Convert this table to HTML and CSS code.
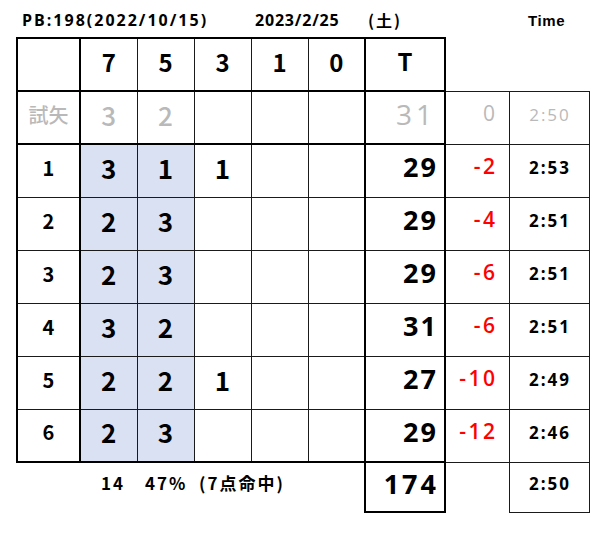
FILE: index.html
```html
<!DOCTYPE html>
<html lang="ja">
<head>
<meta charset="utf-8">
<link rel="stylesheet" href="styles.css">
</head>
<body>
<div class="title">
  <span class="pb">PB:198(2022/10/15)</span>
  <span class="date">2023/2/25</span>
  <span class="dow">(土)</span>
  <span class="time-label">Time</span>
</div>
<table class="sheet">
  <colgroup>
    <col class="c-label"><col class="c-num"><col class="c-num"><col class="c-num"><col class="c-num"><col class="c-num"><col class="c-total"><col class="c-diff"><col class="c-time">
  </colgroup>
  <tr class="head">
    <td class="label"></td><td class="num">7</td><td class="num">5</td><td class="num">3</td><td class="num">1</td><td class="num">0</td><td class="total">T</td><td class="blank"></td><td class="blank"></td>
  </tr>
  <tr class="trial">
    <td class="label">試矢</td><td class="num">3</td><td class="num">2</td><td class="num"></td><td class="num"></td><td class="num"></td><td class="total">31</td><td class="diff">0</td><td class="time">2:50</td>
  </tr>
  <tr class="end">
    <td class="label">1</td><td class="num hit">3</td><td class="num hit">1</td><td class="num">1</td><td class="num"></td><td class="num"></td><td class="total">29</td><td class="diff">-2</td><td class="time">2:53</td>
  </tr>
  <tr class="end">
    <td class="label">2</td><td class="num hit">2</td><td class="num hit">3</td><td class="num"></td><td class="num"></td><td class="num"></td><td class="total">29</td><td class="diff">-4</td><td class="time">2:51</td>
  </tr>
  <tr class="end">
    <td class="label">3</td><td class="num hit">2</td><td class="num hit">3</td><td class="num"></td><td class="num"></td><td class="num"></td><td class="total">29</td><td class="diff">-6</td><td class="time">2:51</td>
  </tr>
  <tr class="end">
    <td class="label">4</td><td class="num hit">3</td><td class="num hit">2</td><td class="num"></td><td class="num"></td><td class="num"></td><td class="total">31</td><td class="diff">-6</td><td class="time">2:51</td>
  </tr>
  <tr class="end">
    <td class="label">5</td><td class="num hit">2</td><td class="num hit">2</td><td class="num">1</td><td class="num"></td><td class="num"></td><td class="total">27</td><td class="diff">-10</td><td class="time">2:49</td>
  </tr>
  <tr class="end last">
    <td class="label">6</td><td class="num hit">2</td><td class="num hit">3</td><td class="num"></td><td class="num"></td><td class="num"></td><td class="total">29</td><td class="diff">-12</td><td class="time">2:46</td>
  </tr>
  <tr class="foot">
    <td class="summary" colspan="6"><span class="s1">14</span><span class="s2">47%</span><span class="s3">(7点命中)</span></td><td class="total">174</td><td class="blank"></td><td class="time">2:50</td>
  </tr>
</table>
</body>
</html>
```
FILE: styles.css
```css
html, body {
  margin: 0;
  padding: 0;
  background: #fff;
}
body {
  font-family: "Noto Sans CJK JP", "Noto Sans", sans-serif;
  color: #000;
  width: 613px;
  height: 540px;
  overflow: hidden;
}
.title {
  display: flex;
  height: 37px;
  align-items: center;
  padding-left: 22px;
  padding-top: 3px;
  font-family: "Open Sans", sans-serif;
  font-weight: 700;
  font-size: 16px;
  letter-spacing: 2px;
  box-sizing: border-box;
}
.title .pb { width: 233px; }
.title .date { width: 113px; letter-spacing: 0.8px; }
.title .dow { width: 160px; font-family: "Noto Sans CJK JP", sans-serif; font-weight: bold; font-size: 16px; letter-spacing: 2px; }
.title .time-label { font-family: "Liberation Sans", sans-serif; font-weight: bold; font-size: 15px; letter-spacing: 0.6px; }

.sheet {
  border-collapse: collapse;
  table-layout: fixed;
  margin-left: 16px;
}
.c-label { width: 63px; }
.c-num { width: 57px; }
.c-total { width: 80px; }
.c-diff { width: 64px; }
.c-time { width: 80px; }

.sheet td {
  padding: 0 0 6px 0;
  vertical-align: middle;
  text-align: center;
  border: 1px solid #1a1a1a;
  line-height: 1;
  white-space: nowrap;
}
.sheet tr { height: 53px; }
.sheet tr.foot { height: 50px; }

.sheet td.label {
  border-left: 2px solid #000;
  border-right: 2px solid #000;
  font-family: "Noto Sans CJK JP", sans-serif;
  font-weight: bold;
  font-size: 20px;
}
.sheet td.num {
  font-family: "Noto Sans CJK JP", sans-serif;
  font-weight: bold;
  font-size: 26px;
}
.sheet td.num.hit { background: #D9E1F2; }
.sheet td.total {
  border-left: 2px solid #000;
  border-right: 2px solid #000;
  text-align: right;
  padding-right: 6px;
  padding-bottom: 8px;
  font-family: "Open Sans", sans-serif;
  font-weight: 700;
  font-size: 27px;
  letter-spacing: 2px;
}
.sheet td.diff {
  border-left: none;
  text-align: right;
  padding-right: 11px;
  padding-bottom: 8px;
  font-family: "Open Sans", sans-serif;
  font-weight: 600;
  font-size: 21px;
  letter-spacing: 2.5px;
  color: #FF0000;
}
.sheet td.time {
  font-family: "Open Sans", sans-serif;
  font-weight: 700;
  font-size: 17px;
  letter-spacing: 2px;
  text-indent: 2px;
  padding-bottom: 7px;
}
.sheet td.blank { border: none; }

.sheet tr.head td { border-top: 2px solid #000; border-bottom: 2px solid #000; }
.sheet tr.head td.num, .sheet tr.head td.total {
  font-family: "Noto Sans CJK JP", sans-serif;
  font-weight: bold;
  font-size: 24px;
  text-align: center;
  padding-right: 0;
  letter-spacing: 0;
}
.sheet tr.head td.blank { border: none; }

.sheet tr.trial td { color: #b9b9b9; border-bottom: 2px solid #000; }
.sheet tr.trial td.diff, .sheet tr.trial td.time { border-bottom: 1px solid #1a1a1a; }
.sheet tr.trial td.label { font-weight: 500; font-size: 20px; letter-spacing: 0; }
.sheet tr.trial td.num { font-weight: 500; }
.sheet tr.trial td.total { font-weight: 500; font-size: 28px; letter-spacing: 4px; padding-right: 8px; }
.sheet tr.trial td.diff { color: #b9b9b9; font-weight: 500; }
.sheet tr.trial td.time { font-weight: 500; }

.sheet tr.last td.label,
.sheet tr.last td.num,
.sheet tr.last td.total { border-bottom: 2px solid #000; }

.sheet tr.foot td.summary {
  border: none;
  text-align: left;
  padding-left: 84px;
  font-family: "Noto Sans CJK JP", sans-serif;
  font-weight: bold;
  font-size: 17px;
  padding-bottom: 10px;
}
.summary .s1 { display: inline-block; width: 44px; letter-spacing: 2px; }
.summary .s2 { display: inline-block; width: 54px; letter-spacing: 2px; }
.summary .s3 { letter-spacing: 2px; }
.sheet tr.foot td.total { border: 2px solid #000; font-size: 27px; letter-spacing: 3px; padding-right: 5px; }
.sheet tr.foot td.blank { border-left: 2px solid #000; border-right: 1px solid #1a1a1a; border-top: 1px solid #1a1a1a; border-bottom: none; }
.sheet tr.foot td.time { border: 1px solid #1a1a1a; }
```
